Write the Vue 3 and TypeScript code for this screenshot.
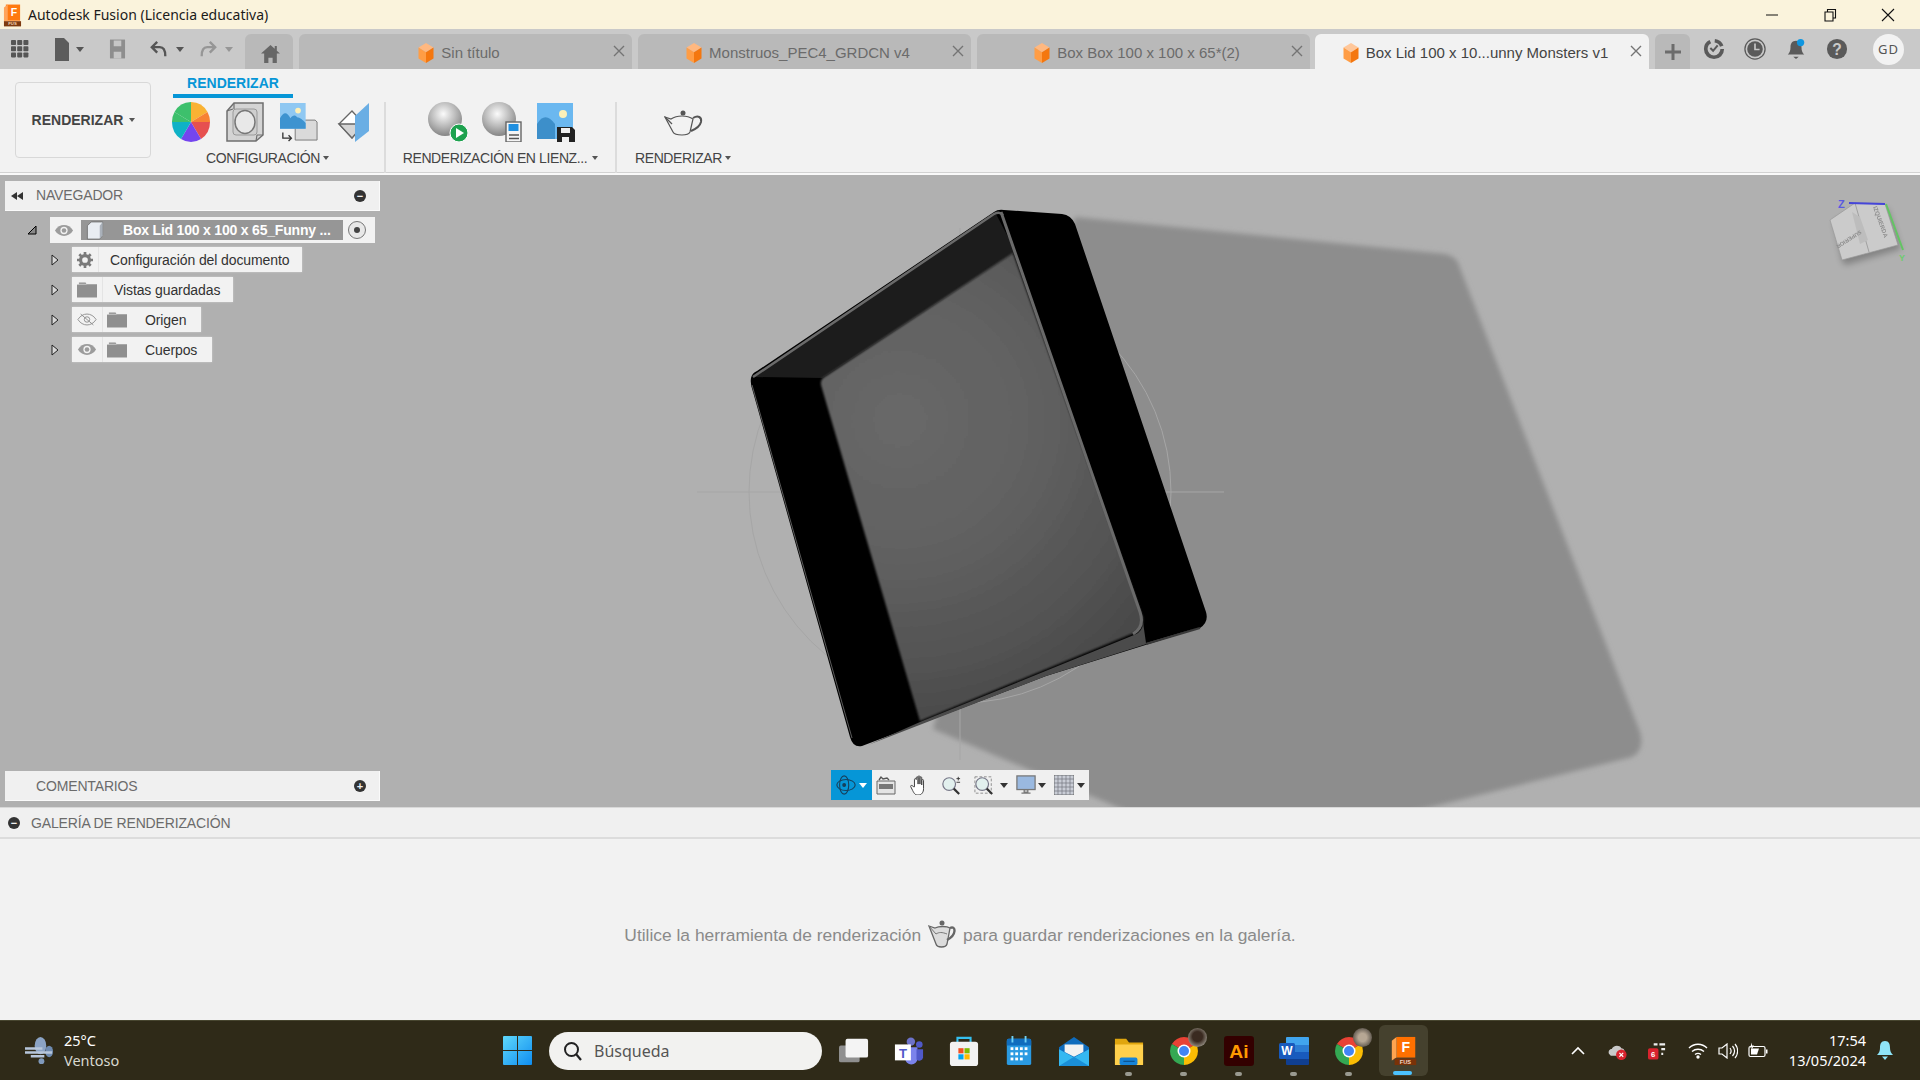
<template>
  <div class="app">
    <header class="titlebar">
      <svg class="title-logo" viewBox="0 0 20 24">
        <path d="M3 1h15v17H3z" fill="#ff7a10" />
        <path d="M1 4l4-3v17l-4 1z" fill="#ffa45a" />
        <path d="M1 18.500h18V24H1z" fill="#7d3a10" />
        <text x="11.500" y="13" class="logo-f">F</text>
        <text x="10" y="23" class="logo-fus">FUS</text>
      </svg>
      <span class="title-text">Autodesk Fusion (Licencia educativa)</span>
      <div class="win-controls">
        <svg viewBox="0 0 14 14"><path d="M1 7h12" stroke="#111" stroke-width="1" /></svg>
        <svg viewBox="0 0 14 14"><path d="M2 4h8v9H2zM4.500 4V1.500h8V10H10" fill="none" stroke="#111" stroke-width="1.100" /></svg>
        <svg viewBox="0 0 14 14"><path d="M1 1l12 12M13 1L1 13" stroke="#111" stroke-width="1.100" /></svg>
      </div>
    </header>

    <div class="tabbar">
      <div class="quick">
        <svg class="q-grid" viewBox="0 0 18 18" fill="#555">
          <template v-for="r in 3" :key="r">
            <rect v-for="c in 3" :key="c" :x="(c - 1) * 6.200" :y="(r - 1) * 6.200" width="5" height="5" rx="0.800" />
          </template>
        </svg>
        <svg class="q-doc" viewBox="0 0 16 23"><path d="M1 0h9l5 5v18H1z" fill="#5c5c5c" /></svg>
        <i class="caret q-c1"></i>
        <svg class="q-save" viewBox="0 0 18 20" fill="#8e8e8e"><path d="M1 0h16v20H1z" /><path d="M5 1h8v6H5zM5 13h8v7H5z" fill="#c6c6c6" /></svg>
        <svg class="q-undo" viewBox="0 0 20 18"><path d="M8 1L2 7l6 6M2 7h9c4 0 6 3 6 10" fill="none" stroke="#555" stroke-width="2.600" /></svg>
        <i class="caret q-c2"></i>
        <svg class="q-redo" viewBox="0 0 20 18"><path d="M12 1l6 6-6 6M18 7H9c-4 0-6 3-6 10" fill="none" stroke="#969696" stroke-width="2.600" /></svg>
        <i class="caret light q-c3"></i>
      </div>
      <div class="home-tab">
        <svg viewBox="0 0 18 18"><path d="M9 1L0 9h3v9h4v-5h4v5h4V9h3l-3-2.700V2h-2v2.500z" fill="#666" /></svg>
      </div>
      <div v-for="tab in tabs" :key="tab.name" class="tab" :class="{ active: tab.active }">
        <svg class="cube" viewBox="0 0 20 24">
          <path d="M10 0l9 5.500L10 11 1 5.500z" :fill="tab.active ? '#ffc79a' : '#ffb880'" />
          <path d="M1 5.500L10 11v13l-9-5.500z" fill="#ff9d45" />
          <path d="M19 5.500L10 11v13l9-5.500z" fill="#f4770f" />
        </svg>
        <span class="tab-name">{{ tab.name }}</span>
        <svg class="tab-close" viewBox="0 0 12 12"><path d="M1 1l10 10M11 1L1 11" stroke="#747474" stroke-width="1.400" /></svg>
      </div>
      <div class="plus-tab">
        <svg viewBox="0 0 16 16"><path d="M8 0v16M0 8h16" stroke="#6c6c6c" stroke-width="3" /></svg>
      </div>
      <div class="tab-right">
        <svg viewBox="0 0 24 24">
          <circle cx="12" cy="12" r="9" fill="none" stroke="#5a5a5a" stroke-width="4" stroke-dasharray="38 5 10 4" />
          <path d="M8 11l3 3 5-6" fill="none" stroke="#5a5a5a" stroke-width="2.200" />
        </svg>
        <svg viewBox="0 0 24 24">
          <circle cx="12" cy="12" r="11" fill="none" stroke="#5a5a5a" stroke-width="1.400" />
          <circle cx="12" cy="12" r="8.500" fill="#5a5a5a" />
          <path d="M12 6v6.500h5" fill="none" stroke="#c8c8c8" stroke-width="1.800" />
        </svg>
        <svg viewBox="0 0 24 24">
          <path d="M12 3c-4 0-6 3-6 7 0 4-1 6-3 8h18c-2-2-3-4-3-8 0-4-2-7-6-7z" fill="#5a5a5a" />
          <path d="M9 20.500h6L12 23z" fill="#5a5a5a" />
          <circle cx="17" cy="5" r="4" fill="#0f96e0" />
        </svg>
        <svg viewBox="0 0 24 24">
          <circle cx="12" cy="12" r="11" fill="#5a5a5a" />
          <text x="12" y="18" class="help-q">?</text>
        </svg>
        <span class="avatar">GD</span>
      </div>
    </div>

    <section class="ribbon">
      <button class="main-btn">RENDERIZAR<i class="caret small"></i></button>
      <div class="ribbon-body">
        <div class="ribbon-tab">RENDERIZAR</div>
        <div class="groups">
          <div class="group g-config">
            <div class="icons">
              <svg viewBox="0 0 38 40">
                <path d="M19 20L19 0A19 20 0 0 0 2.500 10z" fill="#3dc06c" />
                <path d="M19 20L19 0A19 20 0 0 1 35.500 10z" fill="#f9b233" />
                <path d="M19 20L35.500 10A19 20 0 0 1 38 20z" fill="#f78234" />
                <path d="M19 20L38 20A19 20 0 0 1 29 37z" fill="#e65050" />
                <path d="M19 20L29 37A19 20 0 0 1 9 37z" fill="#7445ef" />
                <path d="M19 20L9 37A19 20 0 0 1 0 20z" fill="#0fb2c6" />
                <path d="M19 20L0 20A19 20 0 0 1 2.500 10z" fill="#3dc06c" />
              </svg>
              <svg viewBox="0 0 38 40">
                <path d="M8 1h29v32l-7 6H1V9z" fill="#d4d4d4" stroke="#6f6f6f" stroke-width="1.500" />
                <path d="M8 1v6M37 33h-6M1 9l6-2M30 39l1-6" fill="none" stroke="#6f6f6f" stroke-width="1.200" />
                <rect x="7" y="7" width="24" height="26" rx="3" fill="#cfcfcf" stroke="#9a9a9a" />
                <ellipse cx="19" cy="20" rx="10" ry="11.500" fill="#e8e8e8" stroke="#777" stroke-width="1.500" />
              </svg>
              <svg viewBox="0 0 40 40">
                <path d="M26 18h11l2 2v19H16V26z" fill="#dadada" stroke="#777" />
                <rect x="0" y="0" width="27" height="27" fill="#8fc8f2" />
                <path d="M0 27V16c4-7 7-7 11 0 2-3 5-4 7-1 3 0 6 3 9 6v6z" fill="#3d93d0" />
                <circle cx="19" cy="8" r="3" fill="#fdf0b8" />
                <path d="M3 31v6h9M9 34l3 3-3 3" fill="none" stroke="#333" stroke-width="1.400" />
              </svg>
              <svg class="plane-icon" viewBox="0 0 38 40">
                <path d="M4 22l13-13 12 13-12 14z" fill="#fff" stroke="#666" stroke-width="1.300" />
                <path d="M4 22h25l-12 14z" fill="#d5d5d5" stroke="#666" stroke-width="1.300" />
                <path d="M20 14L34 1v28L20 40z" fill="#6aaee4" />
              </svg>
            </div>
            <div class="group-label label-shift">CONFIGURACIÓN<i class="caret tiny"></i></div>
          </div>
          <div class="group g-canvas">
            <div class="icons canvas-icons">
              <svg viewBox="0 0 40 40">
                <defs>
                  <radialGradient id="ball" cx="0.450" cy="0.350" r="0.700">
                    <stop offset="0" stop-color="#fbfbfb" />
                    <stop offset="0.500" stop-color="#bdbdbd" />
                    <stop offset="1" stop-color="#7c7c7c" />
                  </radialGradient>
                </defs>
                <circle cx="17" cy="17" r="17" fill="url(#ball)" />
                <circle cx="31" cy="31" r="9" fill="#1ea24f" stroke="#fff" />
                <path d="M28 26l8 5-8 5z" fill="#fff" />
              </svg>
              <svg viewBox="0 0 40 40">
                <circle cx="17" cy="17" r="17" fill="url(#ball)" />
                <rect x="24" y="20" width="15" height="20" fill="#f4f4f4" stroke="#666" stroke-width="1.400" />
                <rect x="26.500" y="22" width="10" height="7" fill="#1f8fe0" />
                <path d="M27 33h10M27 36.500h10" stroke="#555" stroke-width="1.300" />
              </svg>
              <svg viewBox="0 0 38 40">
                <rect x="0" y="1" width="36" height="36" fill="#6bb8f0" />
                <path d="M0 37V22c6-10 12-8 18 0v15z" fill="#3d8fca" />
                <circle cx="26" cy="12" r="4" fill="#fdf0b8" />
                <path d="M20 25h15l3 3v12H20z" fill="#222" />
                <path d="M24 26h9v5h-9zM25 35h7v5h-7z" fill="#f0f0f0" />
              </svg>
            </div>
            <div class="group-label">RENDERIZACIÓN EN LIENZ...<i class="caret tiny gap"></i></div>
          </div>
          <div class="group g-render">
            <div class="icons teapot-wrap">
              <svg viewBox="0 0 39 27">
                <path d="M1 8l6 2c3-2 6-3 11-3s8 1 11 3l-3 13c-1 2-4 3-8 3s-8-1-9-3z" fill="none" stroke="#555" stroke-width="1.200" />
                <path d="M1 8l7 7" fill="none" stroke="#555" stroke-width="1.200" />
                <path d="M29 9c5-3 9-1 8 4-1 4-5 7-10 9" fill="none" stroke="#555" stroke-width="2" />
                <circle cx="19" cy="4" r="2.500" fill="#555" />
              </svg>
            </div>
            <div class="group-label">RENDERIZAR<i class="caret tiny"></i></div>
          </div>
        </div>
      </div>
    </section>

    <main class="viewport">
      <svg class="scene" viewBox="0 175 1920 632">
        <defs>
          <filter id="soft"><feGaussianBlur stdDeviation="2.500" /></filter>
          <filter id="floorblur"><feGaussianBlur stdDeviation="1.200" /></filter>
          <filter id="cubeshadow"><feGaussianBlur stdDeviation="3" /></filter>
          <filter id="cubeblur"><feGaussianBlur stdDeviation="0.400" /></filter>
          <radialGradient id="floor" gradientUnits="userSpaceOnUse" cx="900" cy="420" r="360">
            <stop offset="0" stop-color="#686868" />
            <stop offset="0.350" stop-color="#626262" />
            <stop offset="0.700" stop-color="#525252" />
            <stop offset="1" stop-color="#424242" />
          </radialGradient>
        </defs>
        <path d="M1075 217L1445 254Q1457 256 1460 268L1640 732Q1645 750 1632 757L1411 812H1129L933 729Z" fill="#8d8d8d" filter="url(#soft)" />
        <g fill="none" stroke="#a6a6a6" stroke-width="1">
          <circle cx="960" cy="492" r="211" />
          <path d="M697 492H1224M960 228V760" />
        </g>
        <path d="M751 378Q752 373 757 371L994 212Q998 209 1004 210L1062 214Q1071 215 1075 224L1206 612Q1209 622 1200 628L1046 676L862 746Q853 748 850 737L753 392Q750 384 751 378Z" fill="#000" />
        <path d="M754 377L996 214L1016 252L822 378Z" fill="#1c1c1c" />
        <path d="M821 385Q820 379 826 376L1013 253L1143 618Q1144 628 1134 633L920 721Z" fill="url(#floor)" filter="url(#floorblur)" />
        <path d="M920 722L1134 635Q1143 632 1143 622L1146 643L1200 627L1046 676L868 745Z" fill="#4b4b4b" />
        <path d="M1146 644L1200 628" stroke="#3a3a3a" stroke-width="2" />
        <g fill="none" stroke="#6a6a6a">
          <path d="M1001 212L1140 612Q1145 627 1133 634" stroke-width="3" />
          <path d="M753 377L994 214Q1000 211 1003 215" stroke-width="2.500" />
          <path d="M752 385L852 738" stroke="#5a5a5a" stroke-width="1" />
        </g>
        <g class="viewcube">
          <path d="M1832 222Q1830 220 1832 218L1855 204L1885 205L1898 245L1843 261Q1840 260 1839 257Z" fill="#000" opacity="0.250" filter="url(#cubeshadow)" transform="translate(3 4)" />
          <path d="M1830 220L1855 203L1885 204L1898 245L1842 260Z" fill="#cbcbcb" stroke="#999" stroke-width="0.700" />
          <path d="M1855 203L1869 252" fill="none" stroke="#8e8e8e" stroke-width="0.700" />
          <path d="M1852 212L1860 217L1868 240L1860 244Z" fill="#bdbdbd" />
          <g filter="url(#cubeblur)" class="cube-text">
            <text transform="matrix(0.340 0.940 -0.940 0.340 1873 207)" font-size="6">IZQUIERDA</text>
            <text transform="matrix(-0.840 0.540 -0.540 -0.840 1860 230)" font-size="5.500">SUPERIOR</text>
          </g>
          <path d="M1849 203L1885 204" stroke="#4545d8" stroke-width="2" />
          <path d="M1886 204L1903 250" stroke="#63c563" stroke-width="2" />
          <text x="1838" y="208" class="axis z">Z</text>
          <text x="1899" y="261" class="axis y">Y</text>
        </g>
      </svg>

      <div class="browser">
        <div class="panel-head">
          <svg class="rewind" viewBox="0 0 12 8"><path d="M6 0v8L0 4zM12 0v8L6 4z" fill="#333" /></svg>
          <span class="panel-title">NAVEGADOR</span>
          <i class="dot">−</i>
        </div>
        <div class="root-row">
          <svg class="tree-caret corner" viewBox="0 0 10 10"><path d="M9 1v8H1z" fill="#888" stroke="#000" /></svg>
          <div class="root-box">
            <span class="eye-cell">
              <svg viewBox="0 0 22 14"><path d="M1 7c5-8 15-8 20 0-5 8-15 8-20 0z" fill="#9c9c9c" /><circle cx="11" cy="7" r="4" fill="#f2f2f2" /><circle cx="11" cy="7" r="2.500" fill="#9c9c9c" /></svg>
            </span>
            <span class="root-name">
              <svg viewBox="0 0 18 20">
                <path d="M1 5l4-4h12v14l-3 4H1z" fill="#e9edf2" stroke="#666" stroke-width="0.800" />
                <path d="M14 5l3-4v14l-3 4z" fill="#aab1ba" />
              </svg>
              <b>Box Lid 100 x 100 x 65_Funny ...</b>
            </span>
            <span class="radio"><i></i></span>
          </div>
        </div>
        <div v-for="item in treeItems" :key="item.label" class="tree-row">
          <svg class="tree-caret" viewBox="0 0 8 12"><path d="M1 1l6 5-6 5z" fill="#d8d8d8" stroke="#222" /></svg>
          <div class="tree-box">
            <span v-if="item.eye" class="cell">
              <svg class="eye" viewBox="0 0 22 14">
                <template v-if="item.eye === 'on'">
                  <path d="M1 7c5-8 15-8 20 0-5 8-15 8-20 0z" fill="#9c9c9c" /><circle cx="11" cy="7" r="4" fill="#f2f2f2" /><circle cx="11" cy="7" r="2.500" fill="#9c9c9c" />
                </template>
                <template v-else>
                  <path d="M1 7c5-8 15-8 20 0-5 8-15 8-20 0z" fill="none" stroke="#8c8c8c" /><circle cx="11" cy="7" r="3" fill="none" stroke="#8c8c8c" /><path d="M4 1l14 12" stroke="#8c8c8c" />
                </template>
              </svg>
            </span>
            <span v-if="item.icon === 'gear'" class="cell">
              <svg class="gear" viewBox="0 0 18 18">
                <circle cx="9" cy="9" r="5" fill="none" stroke="#7b7b7b" stroke-width="3.600" />
                <path d="M9 0v4M9 14v4M0 9h4M14 9h4M2.600 2.600l3 3M12.400 12.400l3 3M15.400 2.600l-3 3M5.600 12.400l-3 3" stroke="#7b7b7b" stroke-width="3" />
              </svg>
            </span>
            <span v-else class="cell" :class="{ tight: item.eye }">
              <svg class="folder" viewBox="0 0 21 16"><path d="M0 2h2V0h7l1 2h11v14H0z" fill="#8f8f8f" /><path d="M0 2h10" stroke="#f2f2f2" stroke-width="0.600" /></svg>
            </span>
            <span class="tree-label" :class="{ wide: item.eye }">{{ item.label }}</span>
          </div>
        </div>
      </div>

      <div class="panel-head comments">
        <span class="panel-title">COMENTARIOS</span>
        <i class="dot">+</i>
      </div>

      <div class="navbar">
        <span class="nav-orbit">
          <svg viewBox="0 0 24 24" fill="none" stroke="#17405c" stroke-width="1.200">
            <ellipse cx="12" cy="12" rx="10" ry="6" />
            <ellipse cx="10" cy="12" rx="5" ry="10" />
            <circle cx="10" cy="12" r="1.500" fill="#17405c" />
          </svg>
          <i class="caret white"></i>
        </span>
        <svg class="nav-ic first" viewBox="0 0 20 20"><path d="M1 6h18v13H1z" fill="#e4e4e4" stroke="#666" /><path d="M3 9h14v5H3z" fill="#777" /><path d="M3 5l2-3 2 2 4-1 2 2" fill="none" stroke="#555" stroke-width="1.400" /></svg>
        <svg class="nav-ic" viewBox="0 0 20 22"><path d="M5 13V5a1 1 0 012 0V3a1 1 0 012 0v7-8a1 1 0 012 0v8-7a1 1 0 012 0v8-5a1 1 0 012 0v9c0 4-2 7-6 7-3 0-4-1-6-5l-2-4c-1-2 2-2 3 0z" fill="#fff" stroke="#444" stroke-width="1.100" /></svg>
        <svg class="nav-ic" viewBox="0 0 22 22"><circle cx="9" cy="10" r="7" fill="#e2f0ee" stroke="#778" stroke-width="1.300" /><path d="M14 15l6 6" stroke="#333" stroke-width="2.400" /><path d="M17 4h4M19 2v4M17 8h4" stroke="#333" /></svg>
        <svg class="nav-ic" viewBox="0 0 22 22"><rect x="1" y="2" width="18" height="18" fill="none" stroke="#888" stroke-dasharray="3 2" /><circle cx="9" cy="10" r="7" fill="#e2f0ee" stroke="#778" stroke-width="1.300" /><path d="M14 15l6 6" stroke="#333" stroke-width="2.400" /></svg>
        <i class="caret dark c-zoom"></i>
        <svg class="nav-ic mon" viewBox="0 0 22 22"><rect x="1" y="1" width="20" height="15" fill="#9ab9e0" stroke="#777" stroke-width="1.400" /><path d="M9 16h4v3H9zM6 20h10" stroke="#777" stroke-width="1.400" fill="#ccc" /></svg>
        <i class="caret dark c-mon"></i>
        <svg class="nav-ic grid-ic" viewBox="0 0 20 20">
          <rect width="20" height="20" fill="#c9cdd6" stroke="#555" stroke-width="0.800" />
          <path d="M4 0v20M8 0v20M12 0v20M16 0v20M0 4h20M0 8h20M0 12h20M0 16h20" stroke="#727780" stroke-width="0.700" />
        </svg>
        <i class="caret dark c-grid"></i>
      </div>
    </main>

    <section class="gallery">
      <div class="gallery-head">
        <i class="dot">−</i>
        <span class="panel-title">GALERÍA DE RENDERIZACIÓN</span>
      </div>
      <div class="gallery-body">
        <span>Utilice la herramienta de renderización</span>
        <svg viewBox="0 0 32 30">
          <path d="M3 7l6 2c4-2 12-2 15 0l-3 16c-1 4-10 4-11 0z" fill="#dcdcdc" stroke="#666" stroke-width="1.300" />
          <path d="M24 9c6-3 7 7-3 12" fill="none" stroke="#666" stroke-width="2.400" />
          <path d="M3 7l7 8c3-2 6-2 11 0" fill="none" stroke="#777" />
          <circle cx="16" cy="4" r="2.500" fill="#666" />
        </svg>
        <span>para guardar renderizaciones en la galería.</span>
      </div>
    </section>

    <footer class="taskbar">
      <div class="weather">
        <svg viewBox="0 0 32 30">
          <ellipse cx="17" cy="10" rx="6" ry="9" fill="#8ba3c4" />
          <ellipse cx="26" cy="16" rx="4" ry="6" fill="#6f8bb0" />
          <path d="M1 13h18M1 17h28M7 21h14" stroke="#b7c6da" stroke-width="2.600" />
          <ellipse cx="18" cy="26" rx="3" ry="3" fill="#7f99bb" />
        </svg>
        <div class="weather-text">
          <span>25°C</span>
          <span class="muted">Ventoso</span>
        </div>
      </div>
      <svg class="start" viewBox="0 0 29 29">
        <defs>
          <linearGradient id="win" x1="0" y1="0" x2="1" y2="1">
            <stop offset="0" stop-color="#5fd8fb" />
            <stop offset="1" stop-color="#0f8df0" />
          </linearGradient>
        </defs>
        <path d="M0 1a1 1 0 011-1h13v14H0zM15 0h13a1 1 0 011 1v13H15zM0 15h14v14H1a1 1 0 01-1-1zM15 15h14v13a1 1 0 01-1 1H15z" fill="url(#win)" />
      </svg>
      <div class="search">
        <svg viewBox="0 0 20 20"><circle cx="8.500" cy="8.500" r="6.500" fill="none" stroke="#222" stroke-width="2" /><path d="M13 13l5 6" stroke="#222" stroke-width="2.200" /></svg>
        <span>Búsqueda</span>
      </div>
      <div class="apps">
        <div class="app-ic">
          <svg viewBox="0 0 32 30"><rect x="0" y="9" width="22" height="18" fill="#8f8f8f" rx="2" /><rect x="7" y="2" width="24" height="20" fill="#f4f4f4" rx="2" /></svg>
        </div>
        <div class="app-ic">
          <svg viewBox="0 0 32 30">
            <circle cx="18" cy="5" r="4.500" fill="#6d72c9" /><circle cx="27" cy="8" r="3.500" fill="#5059c9" />
            <path d="M12 11h13v12a6.500 6.500 0 01-13 0z" fill="#7b83eb" /><path d="M24 13h7v9a4 4 0 01-7 2z" fill="#5059c9" />
            <rect x="1" y="8" width="17" height="17" fill="#fff" /><text x="9.500" y="22" class="t-teams">T</text>
          </svg>
        </div>
        <div class="app-ic">
          <svg viewBox="0 0 32 32">
            <path d="M9 8V2h14v6" fill="none" stroke="#35c0f0" stroke-width="2.200" />
            <rect x="1" y="6" width="30" height="26" rx="3" fill="#f2f2f2" />
            <path d="M10 13h5.500v5.500H10z" fill="#f25022" /><path d="M16.500 13H22v5.500h-5.500z" fill="#7fba00" />
            <path d="M10 19.500h5.500V25H10z" fill="#00a4ef" /><path d="M16.500 19.500H22V25h-5.500z" fill="#ffb900" />
          </svg>
        </div>
        <div class="app-ic">
          <svg viewBox="0 0 28 32">
            <rect x="1" y="3" width="26" height="28" rx="2" fill="#2a9ae2" />
            <path d="M1 5a2 2 0 012-2h22a2 2 0 012 2v5H1z" fill="#0f6cbd" />
            <path d="M6 0h2v7H6zM20 0h2v7h-2z" fill="#6ed0f5" />
            <g fill="#fff"><rect v-for="n in cal" :key="n.k" :x="n.x" :y="n.y" width="3" height="3" /></g>
          </svg>
        </div>
        <div class="app-ic">
          <svg viewBox="0 0 32 32">
            <path d="M16 1L0 12v20h32V12z" fill="#0f6cbd" />
            <path d="M6 9h20v8l-10 5-10-5z" fill="#f2f2f2" />
            <path d="M0 14l16 9 16-9v18H0z" fill="#35b8f1" />
            <path d="M0 32l16-10 16 10z" fill="#1a8fd8" />
          </svg>
        </div>
        <div class="app-ic">
          <svg viewBox="0 0 32 30">
            <path d="M1 2h12l3 4h15v24H1z" fill="#e0a60e" />
            <path d="M1 8h30v21a1 1 0 01-1 1H2a1 1 0 01-1-1z" fill="#ffd04c" />
            <rect x="6" y="22" width="19" height="8" rx="2" fill="#1683d8" /><path d="M10 26h12" stroke="#0c4f8a" stroke-width="1.200" />
          </svg>
        </div>
        <div class="app-ic chrome-ic">
          <svg viewBox="0 0 30 30">
            <path d="M15 15L2.900 8A14 14 0 0127.100 8z" fill="#e94235" />
            <path d="M15 15L27.100 8A14 14 0 0115 29z" fill="#fbbc04" />
            <path d="M15 15L15 29A14 14 0 012.900 8z" fill="#34a853" />
            <circle cx="15" cy="15" r="6.500" fill="#fff" /><circle cx="15" cy="15" r="5" fill="#4285f4" />
          </svg>
          <span class="chrome-avatar"></span>
        </div>
        <div class="app-ic">
          <svg viewBox="0 0 28 28"><rect width="28" height="28" rx="3" fill="#330000" /><text x="14" y="20.500" class="t-ai">Ai</text></svg>
        </div>
        <div class="app-ic">
          <svg viewBox="0 0 30 30">
            <path d="M8 1h21a1 1 0 011 1v7H7V2a1 1 0 011-1z" fill="#41a5ee" />
            <path d="M7 9h23v7H7z" fill="#2b7cd3" /><path d="M7 16h23v7H7z" fill="#185abd" />
            <path d="M7 23h23v5a1 1 0 01-1 1H8a1 1 0 01-1-1z" fill="#103f91" />
            <rect x="0" y="7" width="16" height="16" rx="1.500" fill="#185abd" />
            <text x="8" y="19" class="t-word">W</text>
          </svg>
        </div>
        <div class="app-ic chrome-ic">
          <svg viewBox="0 0 30 30">
            <path d="M15 15L2.900 8A14 14 0 0127.100 8z" fill="#e94235" />
            <path d="M15 15L27.100 8A14 14 0 0115 29z" fill="#fbbc04" />
            <path d="M15 15L15 29A14 14 0 012.900 8z" fill="#34a853" />
            <circle cx="15" cy="15" r="6.500" fill="#fff" /><circle cx="15" cy="15" r="5" fill="#4285f4" />
          </svg>
          <span class="chrome-avatar light"></span>
        </div>
        <div class="app-ic fusion">
          <svg viewBox="0 0 26 32">
            <path d="M5 1h20v22H5z" fill="#ff7000" />
            <path d="M0 5l5-4v22l-5 3z" fill="#ffa450" />
            <path d="M3 24h23v7H3z" fill="#7a3208" />
            <text x="15" y="17" class="t-f">F</text>
            <text x="14.500" y="30" class="t-fus">FUS</text>
          </svg>
        </div>
        <i v-for="d in runDots" :key="d" class="run-dot" :class="'d' + d"></i>
        <i class="run-bar"></i>
      </div>
      <div class="tray">
        <svg class="t-chev" viewBox="0 0 14 9"><path d="M1 8l6-6 6 6" fill="none" stroke="#fff" stroke-width="1.600" /></svg>
        <svg class="t-cloud" viewBox="0 0 22 18">
          <path d="M2 12c-1-3 1-5 3-5 1-4 8-5 10-1 3 0 4 3 3 5l-2 3H4z" fill="#c9c9c9" />
          <circle cx="15" cy="13" r="5.500" fill="#d9232e" /><path d="M13 11l4 4M17 11l-4 4" stroke="#fff" stroke-width="1.200" />
        </svg>
        <svg class="t-red" viewBox="0 0 20 18">
          <path d="M6 2h4M12 2h6M14 7h4M14 12h2" stroke="#eee" stroke-width="2.200" />
          <rect x="0" y="6" width="11" height="12" rx="2" fill="#d9232e" />
          <text x="5.500" y="15" class="t-six">6</text>
        </svg>
        <svg class="t-wifi" viewBox="0 0 20 16" fill="none" stroke="#fff" stroke-width="1.400">
          <path d="M1 5c5-5 13-5 18 0M4 8.500c3.500-3 8.500-3 12 0M7 11.500c2-1.500 4-1.500 6 0" /><circle cx="10" cy="14" r="1" fill="#fff" />
        </svg>
        <svg class="t-vol" viewBox="0 0 20 16" fill="none" stroke="#fff" stroke-width="1.200">
          <path d="M1 5h3l5-4v14l-5-4H1zM12 5c1.500 2 1.500 4 0 6M14.500 3c2.500 3 2.500 7 0 10M17 1c3.500 4 3.500 10 0 14" />
        </svg>
        <svg class="t-batt" viewBox="0 0 20 16">
          <rect x="1" y="4" width="16" height="10" rx="1.500" fill="none" stroke="#fff" stroke-width="1.200" />
          <path d="M3 6h8l-2 6H3z" fill="#fff" /><path d="M18 7h1.500v4H18z" fill="#fff" /><path d="M4 0L2 5h2l-1 3 3-5H4z" fill="#fff" />
        </svg>
        <div class="clock">
          <span>17:54</span>
          <span>13/05/2024</span>
        </div>
        <svg class="t-bell" viewBox="0 0 16 20">
          <path d="M8 0C4 0 3 3 3 7c0 3-1 5-3 7h16c-2-2-3-4-3-7 0-4-1-7-5-7z" fill="#8fe4f8" />
          <path d="M5 15.500h6L8 19z" fill="#8fe4f8" />
        </svg>
      </div>
    </footer>
  </div>
</template>

<script setup lang="ts">
interface TreeItem {
  label: string
  icon: 'gear' | 'folder'
  eye?: 'on' | 'off'
}

const tabs = [
  { name: 'Sin título', active: false },
  { name: 'Monstruos_PEC4_GRDCN v4', active: false },
  { name: 'Box Box 100 x 100 x 65*(2)', active: false },
  { name: 'Box Lid 100 x 10...unny Monsters v1', active: true },
]

const treeItems: TreeItem[] = [
  { label: 'Configuración del documento', icon: 'gear' },
  { label: 'Vistas guardadas', icon: 'folder' },
  { label: 'Origen', icon: 'folder', eye: 'off' },
  { label: 'Cuerpos', icon: 'folder', eye: 'on' },
]

// which taskbar slots show a running dot
const runDots = [1, 2, 3, 4, 5]

const cal: { k: string; x: number; y: number }[] = []
for (let r = 0; r < 3; r++) {
  for (let c = 0; c < 4; c++) {
    if (r === 2 && c === 3) continue
    cal.push({ k: `${r}-${c}`, x: 5 + c * 5, y: 12 + r * 5.500 })
  }
}
</script>

<style>
html,
body {
  margin: 0;
  overflow: hidden;
}
</style>

<style scoped>
.app {
  width: 1920px;
  height: 1080px;
  display: flex;
  flex-direction: column;
  font-family: "Liberation Sans", Arial, sans-serif;
  color: #444;
  background: #f2f2f2;
  overflow: hidden;
}

svg {
  display: block;
  flex-shrink: 0;
}

i {
  font-style: normal;
}

/* title bar */
.titlebar {
  height: 29px;
  flex-shrink: 0;
  display: flex;
  align-items: center;
  background: #faf3dc;
  padding-left: 3px;
}

.title-logo {
  width: 19px;
  height: 24px;
}

.logo-f {
  font: 700 11px "Liberation Sans", sans-serif;
  fill: #fff;
  text-anchor: middle;
}

.logo-fus {
  font: 700 4.500px "Liberation Sans", sans-serif;
  fill: #f4d6b8;
  text-anchor: middle;
}

.title-text {
  margin-left: 6px;
  font: 14px "Noto Sans", sans-serif;
  color: #1a1a1a;
}

.win-controls {
  margin-left: auto;
  display: flex;
  gap: 44px;
  padding-right: 25px;
}

.win-controls svg {
  width: 14px;
  height: 14px;
}

/* tab bar */
.tabbar {
  height: 40px;
  flex-shrink: 0;
  display: flex;
  align-items: flex-end;
  background: #c9c9c9;
}

.quick {
  width: 245px;
  height: 40px;
  flex-shrink: 0;
  display: flex;
  align-items: center;
}

.q-grid {
  width: 18px;
  height: 18px;
  margin-left: 11px;
}

.q-doc {
  width: 16px;
  height: 23px;
  margin-left: 25px;
}

.caret {
  display: inline-block;
  width: 0;
  height: 0;
  border-left: 4px solid transparent;
  border-right: 4px solid transparent;
  border-top: 5px solid #555;
}

.caret.light {
  border-top-color: #969696;
}

.q-c1 {
  margin-left: 6px;
}

.q-save {
  width: 17px;
  height: 20px;
  margin-left: 25px;
}

.q-undo {
  width: 18px;
  height: 18px;
  margin-left: 24px;
}

.q-c2 {
  margin-left: 8px;
}

.q-redo {
  width: 18px;
  height: 18px;
  margin-left: 15px;
}

.q-c3 {
  margin-left: 8px;
}

.home-tab {
  width: 48px;
  height: 35px;
  margin-right: 6px;
  flex-shrink: 0;
  display: flex;
  align-items: center;
  justify-content: center;
  background: #b9b9b9;
  border-radius: 6px 6px 0 0;
}

.home-tab svg {
  width: 19px;
  height: 19px;
  margin-top: 4px;
  margin-left: 3px;
}

.tab {
  width: 333px;
  height: 35px;
  margin-right: 6px;
  flex-shrink: 0;
  position: relative;
  display: flex;
  align-items: center;
  justify-content: center;
  gap: 6px;
  padding: 2px 14px 0 0;
  box-sizing: border-box;
  background: #b9b9b9;
  border-radius: 6px 6px 0 0;
  font-size: 15px;
  color: #6b6b6b;
}

.tab.active {
  width: 334px;
  margin-left: -1px;
  background: #f2f2f2;
  color: #444;
}

.cube {
  width: 18px;
  height: 20px;
}

.tab-close {
  position: absolute;
  right: 7px;
  top: 11px;
  width: 12px;
  height: 12px;
}

.plus-tab {
  width: 35px;
  height: 35px;
  flex-shrink: 0;
  display: flex;
  align-items: center;
  justify-content: center;
  background: #b9b9b9;
  border-radius: 6px 6px 0 0;
}

.plus-tab svg {
  width: 16px;
  height: 16px;
}

.tab-right {
  flex: 1;
  height: 40px;
  display: flex;
  align-items: center;
  padding-left: 13px;
  gap: 19px;
}

.tab-right > svg {
  width: 22px;
  height: 24px;
}

.help-q {
  font: 700 17px "Liberation Sans", sans-serif;
  fill: #c9c9c9;
  text-anchor: middle;
}

.avatar {
  width: 31px;
  height: 31px;
  margin-left: 6px;
  border-radius: 50%;
  background: #f2f2f2;
  color: #555;
  font: 13px "Noto Sans", sans-serif;
  letter-spacing: 1px;
  display: flex;
  align-items: center;
  justify-content: center;
}

/* ribbon */
.ribbon {
  height: 103px;
  flex-shrink: 0;
  display: flex;
  padding-left: 15px;
  background: #f2f2f2;
  border-bottom: 1px solid #d2d2d2;
}

.main-btn {
  width: 136px;
  height: 76px;
  margin-top: 13px;
  border: 1px solid #d8d8d8;
  border-radius: 4px;
  background: #f3f3f3;
  font: 700 14px "Liberation Sans", sans-serif;
  color: #444;
  display: flex;
  align-items: center;
  justify-content: center;
  gap: 6px;
  padding: 0 0 1px 1px;
}

.caret.small {
  border-left-width: 3px;
  border-right-width: 3px;
  border-top-width: 4px;
}

.ribbon-body {
  margin-left: 14px;
  display: flex;
  flex-direction: column;
}

.ribbon-tab {
  width: 120px;
  height: 25px;
  margin-left: 8px;
  box-sizing: content-box;
  border-bottom: 4px solid #0696d7;
  font-weight: 700;
  font-size: 14px;
  color: #0696d7;
  text-align: center;
  line-height: 28px;
}

.groups {
  display: flex;
}

.group {
  height: 71px;
  display: flex;
  flex-direction: column;
  align-items: center;
  box-sizing: border-box;
  border-right: 2px solid #dcdcdc;
  margin-top: 4px;
}

.g-config {
  width: 221px;
  padding-right: 4px;
}

.g-canvas {
  width: 231px;
}

.g-render {
  width: 132px;
  border-right: none;
}

.icons {
  height: 41px;
  display: flex;
  gap: 16px;
}

.icons svg {
  width: 38px;
  height: 40px;
}

.canvas-icons {
  gap: 14px;
  margin-left: 3px;
}

.canvas-icons svg {
  width: 40px;
}

.plane-icon {
  margin-left: 1px;
}

.teapot-wrap {
  align-items: center;
}

.teapot-wrap svg {
  width: 39px;
  height: 27px;
}

.group-label {
  margin-top: 6px;
  font-size: 14px;
  letter-spacing: -0.400px;
  color: #444;
  line-height: 18px;
  white-space: nowrap;
}

.label-shift {
  margin-right: 10px;
}

.caret.tiny {
  border-left-width: 3px;
  border-right-width: 3px;
  border-top-width: 4px;
  margin-left: 3px;
  vertical-align: 3px;
}

.caret.tiny.gap {
  margin-left: 5px;
}

/* canvas */
.viewport {
  flex: 1;
  min-height: 0;
  position: relative;
  border-top: 2px solid #f9f9f9;
  background: #b0b0b0;
  overflow: hidden;
}

.scene {
  position: absolute;
  left: 0;
  top: 0;
  width: 1920px;
  height: 632px;
}

.axis {
  font: 700 9px "Liberation Sans", sans-serif;
}

.axis.z {
  fill: #5a5ae0;
  font-size: 11px;
}

.axis.y {
  fill: #6ccc6c;
}

.cube-text text {
  fill: #8c8c8c;
  font-family: "Liberation Sans", sans-serif;
  font-weight: 700;
}

.browser {
  position: absolute;
  left: 5px;
  top: 6px;
  width: 375px;
  display: flex;
  flex-direction: column;
}

.panel-head {
  height: 29px;
  display: flex;
  align-items: center;
  background: #f0f0f0;
  border-right: 1px solid #fafafa;
  border-bottom: 1px solid #fafafa;
  box-sizing: content-box;
  padding-right: 13px;
}

.rewind {
  width: 12px;
  height: 8px;
  margin-left: 6px;
}

.panel-title {
  font-size: 14px;
  letter-spacing: -0.150px;
  color: #6b6b6b;
}

.browser .panel-title {
  margin-left: 13px;
  position: relative;
  top: -1px;
}

.dot {
  width: 12px;
  height: 12px;
  border-radius: 50%;
  background: #333;
  color: #f0f0f0;
  font: 700 11px/12px "Liberation Sans", sans-serif;
  text-align: center;
  flex-shrink: 0;
}

.panel-head .dot {
  margin-left: auto;
}

.comments {
  position: absolute;
  left: 5px;
  bottom: 6px;
  width: 361px;
}

.comments .panel-title {
  margin-left: 31px;
}

.root-row {
  margin-top: 6px;
  display: flex;
  align-items: center;
  height: 26px;
}

.tree-caret {
  width: 8px;
  height: 12px;
}

.tree-caret.corner {
  width: 10px;
  height: 10px;
  margin-left: 22px;
  margin-right: 13px;
}

.root-box {
  width: 325px;
  height: 26px;
  display: flex;
  align-items: center;
  background: #f2f2f2;
}

.eye-cell {
  width: 31px;
  padding-left: 4px;
  box-sizing: border-box;
  display: flex;
}

.eye-cell svg {
  width: 20px;
  height: 13px;
}

.root-name {
  width: 262px;
  height: 20px;
  display: flex;
  align-items: center;
  background: #969696;
  color: #fff;
  font-size: 14px;
}

.root-name svg {
  width: 18px;
  height: 19px;
  margin-left: 5px;
}

.root-name b {
  margin-left: 19px;
  letter-spacing: -0.200px;
  white-space: nowrap;
}

.radio {
  width: 18px;
  height: 18px;
  margin-left: 5px;
  box-sizing: border-box;
  border: 1px solid #777;
  border-radius: 50%;
  background: #e8e8e8;
  display: flex;
  align-items: center;
  justify-content: center;
}

.radio i {
  width: 6px;
  height: 6px;
  border-radius: 50%;
  background: #444;
}

.tree-row {
  height: 25px;
  margin-top: 5px;
  display: flex;
  align-items: center;
}

.root-row + .tree-row {
  margin-top: 4px;
}

.tree-row .tree-caret {
  margin-left: 46px;
  margin-right: 13px;
}

.tree-box {
  height: 25px;
  display: flex;
  align-items: center;
  background: #f2f2f2;
  box-shadow: 0 0 2px rgba(255, 255, 255, 0.400);
  font-size: 14px;
  letter-spacing: -0.100px;
  color: #333;
}

.cell {
  height: 25px;
  padding: 0 5px;
  border-right: 1px solid #e4e4e4;
  display: flex;
  align-items: center;
}

.cell.tight {
  border-right: none;
  padding: 0 0 0 4px;
}

.gear {
  width: 16px;
  height: 16px;
}

.eye {
  width: 20px;
  height: 13px;
}

.folder {
  width: 20px;
  height: 16px;
}

.tree-label {
  padding: 0 13px 0 11px;
}

.tree-label.wide {
  padding: 0 15px 0 18px;
}

.navbar {
  position: absolute;
  left: 831px;
  bottom: 7px;
  height: 30px;
  width: 258px;
  display: flex;
  align-items: center;
  background: #f0f0f0;
}

.nav-orbit {
  width: 41px;
  height: 30px;
  flex-shrink: 0;
  display: flex;
  align-items: center;
  gap: 2px;
  padding-left: 4px;
  box-sizing: border-box;
  background: #0696d7;
}

.nav-orbit svg {
  width: 22px;
  height: 24px;
}

.caret.white {
  border-top-color: #fff;
}

.caret.dark {
  border-top-color: #333;
}

.nav-ic {
  width: 20px;
  height: 20px;
  margin-left: 12.500px;
}

.nav-ic.first {
  margin-left: 4px;
}

.nav-ic.mon {
  margin-left: 8px;
}

.nav-ic.grid-ic {
  margin-left: 8px;
}

.c-zoom {
  margin-left: 6px;
}

.c-mon {
  margin-left: 2px;
}

.c-grid {
  margin-left: 3px;
}

/* gallery */
.gallery {
  flex-shrink: 0;
  height: 213px;
  display: flex;
  flex-direction: column;
  background: #f2f2f2;
}

.gallery-head {
  height: 29px;
  display: flex;
  align-items: center;
  gap: 11px;
  padding-left: 8px;
  border-top: 1px solid #d8d8d8;
  border-bottom: 2px solid #dcdcdc;
  background: #f0f0f0;
}

.gallery-body {
  flex: 1;
  display: flex;
  align-items: center;
  justify-content: center;
  gap: 5px;
  padding-top: 11px;
  font-size: 17.400px;
  color: #8a8a8a;
}

.gallery-body svg {
  width: 32px;
  height: 30px;
  margin-top: -3px;
}

/* taskbar */
.taskbar {
  height: 60px;
  flex-shrink: 0;
  position: relative;
  display: flex;
  align-items: center;
  box-sizing: border-box;
  border-top: 1px solid #47452f;
  background: #2f2a18;
  color: #fff;
  font-family: "Noto Sans", sans-serif;
}

.weather {
  width: 503px;
  flex-shrink: 0;
  display: flex;
  align-items: center;
  padding-left: 24px;
  box-sizing: border-box;
  gap: 9px;
}

.weather svg {
  width: 31px;
  height: 29px;
}

.weather-text {
  display: flex;
  flex-direction: column;
  font-size: 14.500px;
  line-height: 20px;
  margin-top: -2px;
}

.muted {
  color: #d8d8d0;
}

.start {
  width: 29px;
  height: 29px;
}

.search {
  width: 273px;
  height: 38px;
  margin-left: 17px;
  flex-shrink: 0;
  display: flex;
  align-items: center;
  gap: 11px;
  padding-left: 14px;
  box-sizing: border-box;
  border-radius: 19px;
  background: #f2f2f0;
  color: #555;
  font-size: 16px;
}

.search svg {
  width: 20px;
  height: 20px;
}

.apps {
  position: relative;
  display: flex;
  align-items: center;
  margin-left: 4px;
  height: 59px;
}

.app-ic {
  width: 55px;
  height: 59px;
  position: relative;
  display: flex;
  align-items: center;
  justify-content: center;
}

.app-ic svg {
  width: 30px;
  height: 30px;
}

.chrome-avatar {
  position: absolute;
  right: 4px;
  top: 7px;
  width: 19px;
  height: 19px;
  border-radius: 50%;
  background: radial-gradient(circle at 50% 45%, #3a2a20 35%, #8a8378 70%);
}

.chrome-avatar.light {
  background: radial-gradient(circle at 50% 50%, #b6a794 30%, #5c554c 75%);
}

.fusion::before {
  content: "";
  position: absolute;
  left: 3px;
  right: 3px;
  top: 4px;
  bottom: 4px;
  border-radius: 6px;
  background: #45412e;
}

.fusion svg {
  position: relative;
}

.t-teams,
.t-word,
.t-f,
.t-fus,
.t-ai,
.t-six {
  font-family: "Liberation Sans", sans-serif;
  font-weight: 700;
  text-anchor: middle;
}

.t-teams {
  font-size: 14px;
  fill: #5059c9;
}

.t-ai {
  font-size: 18px;
  fill: #ff9a00;
}

.t-word {
  font-size: 12px;
  fill: #fff;
}

.t-f {
  font-size: 15px;
  fill: #fff;
}

.t-fus {
  font-size: 6px;
  fill: #f2dcc8;
}

.t-six {
  font-size: 8px;
  fill: #fff;
}

.run-dot {
  position: absolute;
  top: 51px;
  width: 7px;
  height: 4px;
  border-radius: 2px;
  background: #9a9a90;
}

.d1 { left: 299px; }
.d2 { left: 354px; }
.d3 { left: 409px; }
.d4 { left: 464px; }
.d5 { left: 519px; }

.run-bar {
  position: absolute;
  top: 50px;
  left: 567px;
  width: 19px;
  height: 4px;
  border-radius: 2px;
  background: #4cc2ff;
}

.tray {
  position: absolute;
  right: 18px;
  top: 0;
  height: 59px;
  width: 350px;
  display: flex;
  align-items: center;
}

.t-chev {
  width: 14px;
  height: 9px;
  margin-left: 19px;
}

.t-cloud {
  width: 21px;
  height: 18px;
  margin-left: 22px;
}

.t-red {
  width: 19px;
  height: 18px;
  margin-left: 20px;
}

.t-wifi {
  width: 20px;
  height: 16px;
  margin-left: 21px;
}

.t-vol {
  width: 20px;
  height: 16px;
  margin-left: 10px;
}

.t-batt {
  width: 20px;
  height: 17px;
  margin-left: 10px;
}

.clock {
  width: 98px;
  display: flex;
  flex-direction: column;
  align-items: flex-end;
  font-size: 14.500px;
  line-height: 20px;
  margin-top: -2px;
}

.t-bell {
  width: 16px;
  height: 20px;
  margin-left: 11px;
}
</style>
